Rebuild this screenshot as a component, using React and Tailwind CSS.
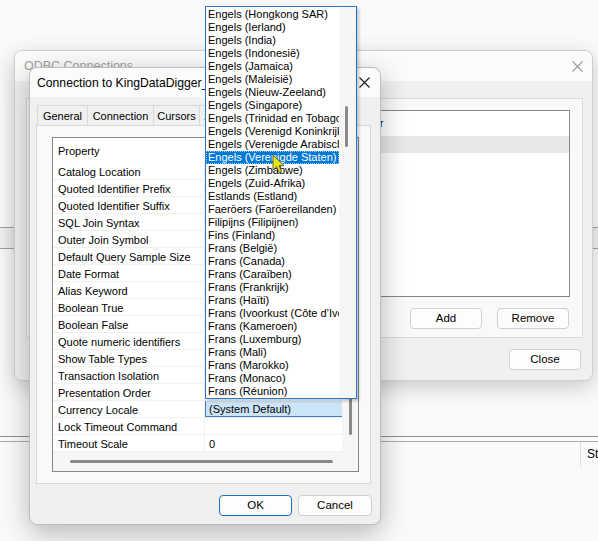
import React from "react";

const locales = [
  "Engels (Hongkong SAR)",
  "Engels (Ierland)",
  "Engels (India)",
  "Engels (Indonesië)",
  "Engels (Jamaica)",
  "Engels (Maleisië)",
  "Engels (Nieuw-Zeeland)",
  "Engels (Singapore)",
  "Engels (Trinidad en Tobago)",
  "Engels (Verenigd Koninkrijk)",
  "Engels (Verenigde Arabische Emiraten)",
  "Engels (Verenigde Staten)",
  "Engels (Zimbabwe)",
  "Engels (Zuid-Afrika)",
  "Estlands (Estland)",
  "Faeröers (Faröereilanden)",
  "Filipijns (Filipijnen)",
  "Fins (Finland)",
  "Frans (België)",
  "Frans (Canada)",
  "Frans (Caraïben)",
  "Frans (Frankrijk)",
  "Frans (Haïti)",
  "Frans (Ivoorkust (Côte d’Ivoire))",
  "Frans (Kameroen)",
  "Frans (Luxemburg)",
  "Frans (Mali)",
  "Frans (Marokko)",
  "Frans (Monaco)",
  "Frans (Réunion)",
];

const props = [
  ["Catalog Location", ""],
  ["Quoted Identifier Prefix", ""],
  ["Quoted Identifier Suffix", ""],
  ["SQL Join Syntax", ""],
  ["Outer Join Symbol", ""],
  ["Default Query Sample Size", ""],
  ["Date Format", ""],
  ["Alias Keyword", ""],
  ["Boolean True", ""],
  ["Boolean False", ""],
  ["Quote numeric identifiers", ""],
  ["Show Table Types", ""],
  ["Transaction Isolation", ""],
  ["Presentation Order", ""],
  ["Currency Locale", "(System Default)"],
  ["Lock Timeout Command", ""],
  ["Timeout Scale", "0"],
];

function CloseX({ color }) {
  return (
    <svg width="11" height="11" viewBox="0 0 11 11">
      <path d="M0.5 0.5 L10.5 10.5 M10.5 0.5 L0.5 10.5" stroke={color} strokeWidth="1.1" fill="none" />
    </svg>
  );
}

function Btn({ children, primary, className }) {
  return (
    <div
      className={
        "flex items-center justify-center rounded-[4px] border bg-[#fdfdfd] text-[11.5px] text-black " +
        (primary ? "border-[#1f6fc0] " : "border-[#d0d0d0] ") +
        (className || "")
      }
    >
      {children}
    </div>
  );
}

export default function App() {
  return (
    <div className="relative w-[598px] h-[541px] overflow-hidden bg-[#fafafa] text-black font-['Liberation_Sans','Noto_Sans',sans-serif]">
      {/* background application */}
      <div className="flex flex-col h-full">
        <div className="h-[227px] shrink-0" />
        <div className="h-[22px] shrink-0 border-y border-[#a3a3a3] bg-[#f0f0f0]" />
        <div className="h-[187px] shrink-0" />
        <div className="h-[6px] shrink-0 border-t border-[#8e8e8e] border-b border-b-[#ababab]" />
        <div className="flex justify-end">
          <div className="h-[25px] w-[18px] border-l border-[#dedede] pl-[6px] text-[12px] leading-[25px] overflow-hidden whitespace-nowrap">
            Status
          </div>
        </div>
      </div>

      {/* ODBC Connections (back dialog) */}
      <div className="absolute left-[14px] top-[50px] w-[579px] h-[331px] rounded-[8px] border border-[#cfcfcf] bg-[#f0f0f0] shadow-[0_6px_22px_rgba(0,0,0,0.2)] flex flex-col overflow-hidden">
        <div className="h-[30px] shrink-0 bg-[#fbfbfb] flex items-center justify-between pl-[9px] pr-[9px]">
          <span className="text-[12.5px] text-[#a0a0a0] pt-[1px]">ODBC Connections</span>
          <CloseX color="#9a9a9a" />
        </div>
        <div className="flex-1 flex flex-col pl-[11px] pr-[9px] pt-[17px]">
          <div className="h-[240px] border border-[#dadada] bg-[#f9f9f9] flex flex-col pl-[11px] pr-[12px] pt-[11px]">
            <div className="h-[187px] border border-[#828790] bg-white flex flex-col">
              <div className="h-[25px] flex items-center text-[11px]">
                <div className="w-[315px] pl-[5px]">Name</div>
                <div>Driver</div>
              </div>
              <div className="h-[17px] bg-[#e8e8e8] flex items-center text-[11px] pl-[5px]">KingDataDigger_ODBC</div>
            </div>
            <div className="flex justify-end gap-[15px] mt-[11px] pr-[1px]">
              <Btn className="w-[72px] h-[21px]">Add</Btn>
              <Btn className="w-[72px] h-[21px]">Remove</Btn>
            </div>
          </div>
          <div className="flex justify-end mt-[11px] pr-[2px]">
            <Btn className="w-[72px] h-[21px]">Close</Btn>
          </div>
        </div>
      </div>

      {/* Connection to KingDataDigger (front dialog) */}
      <div className="absolute left-[29px] top-[67px] w-[352px] h-[458px] rounded-[8px] border border-[#bdbdbd] bg-[#f0f0f0] shadow-[0_8px_28px_rgba(0,0,0,0.28)] flex flex-col overflow-hidden">
        <div className="h-[29px] shrink-0 bg-[#fbfbfb] flex items-center justify-between pl-[7px] pr-[10px]">
          <span className="text-[12.2px] whitespace-nowrap pt-[1px]">Connection to KingDataDigger_ODBC</span>
          <CloseX color="#1a1a1a" />
        </div>
        <div className="flex-1 flex flex-col pl-[6px] pr-[9px] pt-[8px]">
          <div className="flex h-[20px] pl-[1px] text-[11px]">
            <div className="w-[50px] flex items-center justify-center pt-[1px] border-t border-l border-[#d9d9d9]">General</div>
            <div className="w-[66px] flex items-center justify-center pt-[1px] border-t border-l border-[#d9d9d9]">Connection</div>
            <div className="w-[46px] flex items-center justify-center pt-[1px] border-t border-l border-[#d9d9d9]">Cursors</div>
            <div className="w-[60px] flex items-center justify-center pt-[1px] border-t border-l border-r border-[#d9d9d9]">Advanced</div>
          </div>
          <div className="h-[359px] border border-[#d9d9d9] bg-[#f9f9f9] pl-[15px] pr-[11px] pt-[11px]">
            {/* property grid */}
            <div className="h-[335px] border border-[#828790] bg-white flex flex-col text-[11px]">
              <div className="flex h-[314px]">
                <div className="w-[289px] flex flex-col">
                  <div className="h-[25px] shrink-0 flex items-center pl-[5px] pt-[2px]">Property</div>
                  {props.map(([name, val], i) => (
                    <div key={i} className="h-[17px] shrink-0 flex border-b border-[#f0f0f0]">
                      <div className="w-[152px] shrink-0 border-r border-[#f0f0f0] pl-[5px] leading-[18px] whitespace-nowrap overflow-hidden">
                        {name}
                      </div>
                      {name === "Currency Locale" ? (
                        <div className="flex-1 bg-[#cce4f7] border-l border-b border-[#3b7fc4] pl-[3px] leading-[17px] overflow-hidden">{val}</div>
                      ) : (
                        <div className="flex-1 pl-[4px] leading-[18px] overflow-hidden">{val}</div>
                      )}
                    </div>
                  ))}
                </div>
                <div className="flex-1 bg-[#f6f6f6]">
                  <div className="ml-[7px] mt-[160px] w-[3px] h-[137px] rounded-full bg-[#8a8a8a]" />
                </div>
              </div>
              <div className="flex-1 flex bg-[#f6f6f6]">
                <div className="w-[289px]">
                  <div className="ml-[17px] mt-[8px] h-[3px] w-[263px] rounded-full bg-[#8a8a8a]" />
                </div>
              </div>
            </div>
          </div>
          <div className="flex justify-end gap-[6px] mt-[11px] mr-[-1px]">
            <Btn primary className="w-[73px] h-[21px]">OK</Btn>
            <Btn className="w-[74px] h-[21px]">Cancel</Btn>
          </div>
        </div>
      </div>

      {/* open combo dropdown list */}
      <div className="absolute left-[205px] top-[6px] w-[152px] h-[393px] border border-[#2f76c4] bg-white flex shadow-[2px_2px_3px_rgba(0,0,0,0.22)]">
        <div className="w-[133px] pt-[1px] flex flex-col text-[11px]">
          {locales.map((l, i) =>
            i === 11 ? (
              <div key={i} className="h-[13px] shrink-0 bg-[#0078d7] text-white pl-[2px] leading-[12px] whitespace-nowrap overflow-hidden outline-1 outline-dotted outline-offset-[-1px] outline-[#9cc8f0]">
                {l}
              </div>
            ) : (
              <div key={i} className="h-[13px] shrink-0 pl-[2px] leading-[13px] whitespace-nowrap overflow-hidden">
                {l}
              </div>
            )
          )}
        </div>
        <div className="flex-1 bg-[#f6f6f6]">
          <div className="ml-[6px] mt-[99px] w-[3px] h-[41px] rounded-full bg-[#8a8a8a]" />
        </div>
      </div>

      {/* mouse pointer */}
      <svg className="absolute left-[272px] top-[154px]" width="13" height="20" viewBox="0 0 13 20">
        <path d="M1 1 L1 16 L4.6 12.6 L7.2 18.5 L9.6 17.4 L7 11.6 L12 11.6 Z" fill="#e4e21a" stroke="#5d5a10" strokeWidth="0.9" strokeLinejoin="round" />
      </svg>
    </div>
  );
}
